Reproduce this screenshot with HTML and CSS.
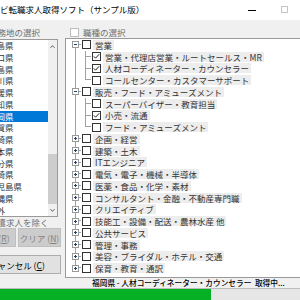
FILE: index.html
```html
<!DOCTYPE html>
<html lang="ja">
<head>
    <meta charset="UTF-8">
    <meta name="viewport" content="width=device-width, initial-scale=1.0">
    <title>ナビ転職求人取得ソフト（サンプル版）</title>
    <link rel="stylesheet" href="styles.css">
</head>
<body>
<div class="window">
    <div class="titlebar">
        <span class="title">ナビ転職求人取得ソフト（サンプル版）</span>
        <div class="caption">
            <span class="cap-btn"><span class="min-icon"></span></span>
            <span class="cap-btn"><span class="max-icon"></span></span>
            <span class="cap-btn">×</span>
        </div>
    </div>

    <div class="content">
        <div class="left">
            <div class="group-head"><span class="check off"></span>勤務地の選択</div>
            <div class="listbox">
                <div class="list-items">
                    <div class="list-item">広島県</div>
                    <div class="list-item">山口県</div>
                    <div class="list-item">徳島県</div>
                    <div class="list-item">香川県</div>
                    <div class="list-item">愛媛県</div>
                    <div class="list-item">高知県</div>
                    <div class="list-item selected">福岡県</div>
                    <div class="list-item">佐賀県</div>
                    <div class="list-item">長崎県</div>
                    <div class="list-item">熊本県</div>
                    <div class="list-item">大分県</div>
                    <div class="list-item">宮崎県</div>
                    <div class="list-item">鹿児島県</div>
                    <div class="list-item">沖縄県</div>
                    <div class="list-item">海外</div>
                </div>
                <div class="scrollbar">
                    <span class="arrow">
                        <svg width="5" height="3" viewBox="0 0 5 3"><polyline points="0.5,2.8 2.5,0.6 4.5,2.8" fill="none" stroke="#606060" stroke-width="1"/></svg>
                    </span>
                    <span class="track"><span class="thumb"></span></span>
                    <span class="arrow">
                        <svg width="5" height="3" viewBox="0 0 5 3"><polyline points="0.5,0.2 2.5,2.4 4.5,0.2" fill="none" stroke="#606060" stroke-width="1"/></svg>
                    </span>
                </div>
            </div>
            <div class="exclude"><span class="check off"></span>派遣求人を除く</div>
            <div class="btn-row">
                <button class="btn" disabled>開始 (<u>R</u>)</button>
                <button class="btn" disabled>クリア (<u>N</u>)</button>
            </div>
            <button class="btn cancel">キャンセル (<u>C</u>)</button>
        </div>

        <div class="right">
            <div class="group-head"><span class="check off"></span>職種の選択</div>
            <div class="tree">
                <div class="node"><span class="cell first"><span class="exp"></span></span><span class="box"></span><span class="label">営業</span></div>
                <div class="node"><span class="cell pipe"></span><span class="cell tee"></span><span class="box checked"><svg width="7" height="7" viewBox="0 0 7 7"><polyline points="0.8,3.4 2.6,5.2 6.2,1.2" fill="none" stroke="#222" stroke-width="1"/></svg></span><span class="label">営業・代理店営業・ルートセールス・MR</span></div>
                <div class="node"><span class="cell pipe"></span><span class="cell tee"></span><span class="box checked"><svg width="7" height="7" viewBox="0 0 7 7"><polyline points="0.8,3.4 2.6,5.2 6.2,1.2" fill="none" stroke="#222" stroke-width="1"/></svg></span><span class="label">人材コーディネーター・カウンセラー</span></div>
                <div class="node"><span class="cell pipe"></span><span class="cell last"></span><span class="box"></span><span class="label">コールセンター・カスタマーサポート</span></div>
                <div class="node"><span class="cell tee"><span class="exp"></span></span><span class="box"></span><span class="label">販売・フード・アミューズメント</span></div>
                <div class="node"><span class="cell pipe"></span><span class="cell tee"></span><span class="box"></span><span class="label">スーパーバイザー・教育担当</span></div>
                <div class="node"><span class="cell pipe"></span><span class="cell tee"></span><span class="box checked"><svg width="7" height="7" viewBox="0 0 7 7"><polyline points="0.8,3.4 2.6,5.2 6.2,1.2" fill="none" stroke="#222" stroke-width="1"/></svg></span><span class="label">小売・流通</span></div>
                <div class="node"><span class="cell pipe"></span><span class="cell last"></span><span class="box"></span><span class="label">フード・アミューズメント</span></div>
                <div class="node"><span class="cell tee"><span class="exp plus"></span></span><span class="box"></span><span class="label">企画・経営</span></div>
                <div class="node"><span class="cell tee"><span class="exp plus"></span></span><span class="box"></span><span class="label">建築・土木</span></div>
                <div class="node"><span class="cell tee"><span class="exp plus"></span></span><span class="box"></span><span class="label">ITエンジニア</span></div>
                <div class="node"><span class="cell tee"><span class="exp plus"></span></span><span class="box"></span><span class="label">電気・電子・機械・半導体</span></div>
                <div class="node"><span class="cell tee"><span class="exp plus"></span></span><span class="box"></span><span class="label">医薬・食品・化学・素材</span></div>
                <div class="node"><span class="cell tee"><span class="exp plus"></span></span><span class="box"></span><span class="label">コンサルタント・金融・不動産専門職</span></div>
                <div class="node"><span class="cell tee"><span class="exp plus"></span></span><span class="box"></span><span class="label">クリエイティブ</span></div>
                <div class="node"><span class="cell tee"><span class="exp plus"></span></span><span class="box"></span><span class="label">技能工・設備・配送・農林水産 他</span></div>
                <div class="node"><span class="cell tee"><span class="exp plus"></span></span><span class="box"></span><span class="label">公共サービス</span></div>
                <div class="node"><span class="cell tee"><span class="exp plus"></span></span><span class="box"></span><span class="label">管理・事務</span></div>
                <div class="node"><span class="cell tee"><span class="exp plus"></span></span><span class="box"></span><span class="label">美容・ブライダル・ホテル・交通</span></div>
                <div class="node"><span class="cell last"><span class="exp plus"></span></span><span class="box"></span><span class="label">保育・教育・通訳</span></div>
            </div>
        </div>
    </div>

    <div class="status">福岡県 - 人材コーディネーター・カウンセラー  取得中...</div>
    <div class="progress"><div class="progress-fill" style="width: 67.5%"></div></div>
</div>
</body>
</html>
```

FILE: styles.css
```css
body {
    margin: 0;
    width: 300px;
    height: 300px;
    overflow: hidden;
    background-color: #f0f0f0;
    font-family: "Noto Sans CJK JP", sans-serif;
    font-size: 8.5px;
    color: #000;
}

.window {
    width: 362px;
    margin-left: -30px;
}

/* title bar */
.titlebar {
    height: 20px;
    background-color: #fff;
    display: flex;
    align-items: center;
}
.title {
    padding-left: 21.5px;
    margin-top: -2px;
    white-space: nowrap;
}
.caption {
    margin-left: auto;
    display: flex;
}
.cap-btn {
    width: 32px;
    height: 20px;
    display: flex;
    align-items: center;
    justify-content: center;
    font-size: 12px;
}
.min-icon {
    width: 8px;
    height: 1px;
    background-color: #000;
}
.max-icon {
    width: 7px;
    height: 7px;
    box-sizing: border-box;
    border: 1px solid #c4c4c4;
    margin-top: -1px;
}

/* main area */
.content {
    display: flex;
    gap: 4px;
    padding: 0 3px;
    height: 258px;
}
.left {
    width: 88px;
    display: flex;
    flex-direction: column;
}
.right {
    flex: 1;
    display: flex;
    flex-direction: column;
}

.group-head {
    display: flex;
    align-items: center;
    gap: 4px;
    padding-left: 5px;
    color: #6d6d6d;
    white-space: nowrap;
    box-sizing: border-box;
}
.left .group-head {
    height: 19px;
    padding-top: 4px;
    padding-left: 3px;
}
.right .group-head {
    height: 18px;
    padding-top: 6px;
}

.check {
    width: 9px;
    height: 9px;
    box-sizing: border-box;
    border: 1px solid #333;
    background-color: #fff;
    flex: none;
}
.check.off {
    border-color: #bcbcbc;
}

/* prefecture list */
.listbox {
    width: 85px;
    height: 178px;
    box-sizing: border-box;
    border: 1px solid #9a9a9a;
    background-color: #fff;
    display: flex;
    overflow: hidden;
}
.list-items {
    flex: 1;
}
.list-item {
    height: 11.75px;
    line-height: 11.75px;
    padding-left: 14px;
    color: #333;
    white-space: nowrap;
}
.list-item.selected {
    background-color: #0078d7;
    color: #fff;
}
.scrollbar {
    width: 9px;
    display: flex;
    flex-direction: column;
    background-color: #f0f0f0;
}
.arrow {
    height: 12px;
    display: flex;
    align-items: center;
    justify-content: center;
    flex: none;
}
.arrow svg {
    display: block;
}
.track {
    flex: 1;
    display: flex;
    flex-direction: column;
    justify-content: flex-end;
}
.thumb {
    height: 50px;
    background-color: #cdcdcd;
}

.exclude {
    height: 10px;
    display: flex;
    align-items: center;
    gap: 4px;
    padding-left: 3px;
    color: #6d6d6d;
    white-space: nowrap;
}

/* buttons */
.btn-row {
    display: flex;
    gap: 2px;
    margin-top: 1px;
}
.btn {
    flex: 1;
    height: 19px;
    padding: 0;
    font: inherit;
    color: #000;
    background-color: #e1e1e1;
    border: 1px solid #adadad;
    white-space: nowrap;
    overflow: hidden;
}
.btn:disabled {
    background-color: #cccccc;
    border-color: #bfbfbf;
    color: #838383;
}
.cancel {
    flex: none;
    width: 100%;
    margin-top: 8px;
}

/* job tree */
.tree {
    flex: 1;
    background-color: #fff;
    border: 1px solid #9a9a9a;
    padding-left: 5px;
    color: #333;
}
.node {
    display: flex;
    align-items: center;
    height: 11.75px;
    white-space: nowrap;
}
.cell {
    width: 10px;
    height: 100%;
    flex: none;
    display: flex;
    align-items: center;
    padding-left: 1px;
    box-sizing: border-box;
}
.cell.pipe {
    background: linear-gradient(#a0a0a0, #a0a0a0) 4px 0 / 1px 100% no-repeat;
}
.cell.tee {
    background:
        linear-gradient(#a0a0a0, #a0a0a0) 4px 0 / 1px 100% no-repeat,
        linear-gradient(#a0a0a0, #a0a0a0) 4px 5px / 6px 1px no-repeat;
}
.cell.last {
    background:
        linear-gradient(#a0a0a0, #a0a0a0) 4px 0 / 1px 6px no-repeat,
        linear-gradient(#a0a0a0, #a0a0a0) 4px 5px / 6px 1px no-repeat;
}
.cell.first {
    background:
        linear-gradient(#a0a0a0, #a0a0a0) 4px 5px / 1px 100% no-repeat,
        linear-gradient(#a0a0a0, #a0a0a0) 4px 5px / 6px 1px no-repeat;
}
.exp {
    width: 7px;
    height: 7px;
    box-sizing: border-box;
    border: 1px solid #9a9a9a;
    background:
        linear-gradient(#1f3f75, #1f3f75) center / 3px 1px no-repeat,
        #fff;
}
.exp.plus {
    background:
        linear-gradient(#1f3f75, #1f3f75) center / 3px 1px no-repeat,
        linear-gradient(#1f3f75, #1f3f75) center / 1px 3px no-repeat,
        #fff;
}
.box {
    width: 9px;
    height: 9px;
    box-sizing: border-box;
    border: 1px solid #333;
    background-color: #fff;
    margin-left: 1px;
    flex: none;
    display: flex;
    align-items: center;
    justify-content: center;
}
.box svg {
    display: block;
}
.label {
    margin-left: 2px;
    padding: 0 2px;
    height: 10px;
    line-height: 10px;
    background-color: #ededed;
}

/* status and progress */
.status {
    height: 10px;
    line-height: 10px;
    padding-left: 122px;
    font-size: 7.7px;
    font-weight: 500;
    white-space: pre;
}
.progress {
    margin-left: 3px;
    width: 353px;
    height: 14px;
    box-sizing: border-box;
    border: 1px solid #bcbcbc;
    background-color: #e6e6e6;
}
.progress-fill {
    height: 100%;
    background-color: #06b025;
}
```
